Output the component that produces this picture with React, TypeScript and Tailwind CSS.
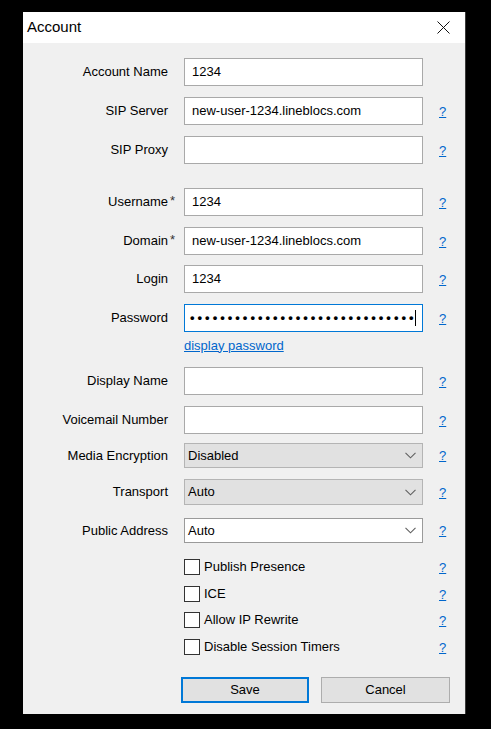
import React from "react";

const font = { fontFamily: '"Liberation Sans", Arial, sans-serif' };

const Help = () => (
  <a className="text-[13px] leading-none text-[#0066cc] underline" href="#">
    ?
  </a>
);

const Chevron = () => (
  <svg width="11" height="7" viewBox="0 0 11 7" className="shrink-0">
    <polyline points="0.5,0.8 5.5,5.8 10.5,0.8" fill="none" stroke="#606060" strokeWidth="1.1" />
  </svg>
);

type RowProps = {
  label: string;
  required?: boolean;
  help?: boolean;
  className?: string;
  children: React.ReactNode;
};

const Row = ({ label, required, help = true, className = "", children }: RowProps) => (
  <div className={`flex items-center shrink-0 ${className}`}>
    <div className="w-[145px] text-right text-[13px] leading-[16px] text-black">{label}</div>
    <div className="w-[16px] pl-[2px] text-[13px] leading-none text-[#333] -mt-[4px]">
      {required ? "*" : ""}
    </div>
    {children}
    <div className="ml-[16px] w-[10px] flex justify-start">{help ? <Help /> : null}</div>
  </div>
);

const TextBox = ({ value = "" }: { value?: string }) => (
  <div className="w-[239px] h-[28px] bg-white border border-[#a9a9a9] flex items-center pl-[7px] text-[13px] leading-[16px] text-black">
    {value}
  </div>
);

const Select = ({ value, white = false, tall = false }: { value: string; white?: boolean; tall?: boolean }) => (
  <div
    className={`w-[239px] ${tall ? "h-[26px]" : "h-[25px]"} border flex items-center justify-between pl-[3px] pr-[6px] text-[13px] leading-[16px] text-black ${
      white ? "bg-white border-[#9a9a9a]" : "bg-[#e1e1e1] border-[#b4b4b4]"
    }`}
  >
    <span>{value}</span>
    <Chevron />
  </div>
);

const Check = ({ label, className = "" }: { label: string; className?: string }) => (
  <div className={`flex items-center h-[16px] shrink-0 ${className}`}>
    <div className="w-[161px]" />
    <div className="w-[16px] h-[16px] border border-[#333] bg-white" />
    <div className="ml-[4px] w-[219px] text-[13px] leading-[16px] text-black">{label}</div>
    <div className="ml-[16px] w-[10px]">
      <Help />
    </div>
  </div>
);

export default function App() {
  return (
    <div className="w-[491px] h-[729px] bg-black pt-[12px] pl-[23px]" style={font}>
      <div className="w-[443px] h-[702px] flex flex-col border-r border-[#3a3a3a]">
        <div className="h-[31px] shrink-0 bg-white flex items-center justify-between pl-[4px] pr-[15px]">
          <span className="text-[15px] text-black">Account</span>
          <svg width="13" height="13" viewBox="0 0 13 13">
            <path d="M0.5 0.5 L12.5 12.5 M12.5 0.5 L0.5 12.5" stroke="#111" strokeWidth="1" />
          </svg>
        </div>
        <div className="flex-1 min-h-0 bg-[#f0f0f0] flex flex-col pt-[15px]">
          <Row label="Account Name" help={false}>
            <TextBox value="1234" />
          </Row>
          <Row label="SIP Server" className="mt-[11px]">
            <TextBox value="new-user-1234.lineblocs.com" />
          </Row>
          <Row label="SIP Proxy" className="mt-[11px]">
            <TextBox />
          </Row>
          <Row label="Username" required className="mt-[24px]">
            <TextBox value="1234" />
          </Row>
          <Row label="Domain" required className="mt-[11px]">
            <TextBox value="new-user-1234.lineblocs.com" />
          </Row>
          <Row label="Login" className="mt-[10px]">
            <TextBox value="1234" />
          </Row>
          <Row label="Password" className="mt-[11px]">
            <div className="w-[239px] h-[28px] bg-white border border-[#0078d7] flex items-center pl-[5px] text-[13px] leading-[16px] text-black overflow-hidden">
              <span className="tracking-[3px] font-bold">{"•".repeat(30)}</span>
              <span className="w-px h-[16px] bg-black -ml-[2px]" />
            </div>
          </Row>
          <div className="mt-[5px] h-[16px] shrink-0 pl-[161px] flex items-center">
            <a href="#" className="text-[13px] leading-none text-[#0066cc] underline">
              display password
            </a>
          </div>
          <Row label="Display Name" className="mt-[14px]">
            <TextBox />
          </Row>
          <Row label="Voicemail Number" className="mt-[11px]">
            <TextBox />
          </Row>
          <Row label="Media Encryption" className="mt-[9px]">
            <Select value="Disabled" />
          </Row>
          <Row label="Transport" className="mt-[11px]">
            <Select value="Auto" tall />
          </Row>
          <Row label="Public Address" className="mt-[13px]">
            <Select value="Auto" white />
          </Row>
          <Check label="Publish Presence" className="mt-[16px]" />
          <Check label="ICE" className="mt-[11px]" />
          <Check label="Allow IP Rewrite" className="mt-[10px]" />
          <Check label="Disable Session Timers" className="mt-[11px]" />
          <div className="mt-[22px] shrink-0 flex pl-[158px] gap-[12px]">
            <button className="w-[128px] h-[26px] bg-[#e1e1e1] border-2 border-[#0078d7] text-[13px] text-black">
              Save
            </button>
            <button className="w-[129px] h-[26px] bg-[#e1e1e1] border border-[#adadad] text-[13px] text-black">
              Cancel
            </button>
          </div>
        </div>
      </div>
    </div>
  );
}
